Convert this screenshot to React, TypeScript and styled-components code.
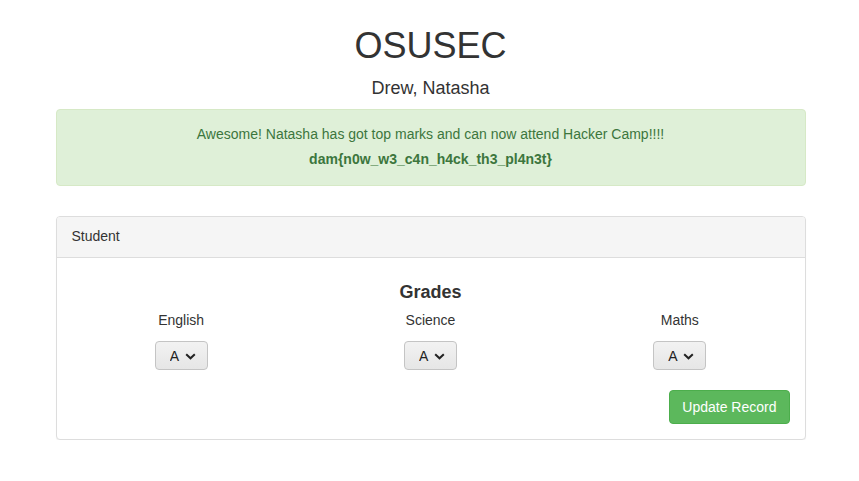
import React from "react";
import styled, { createGlobalStyle } from "styled-components";

const Global = createGlobalStyle`
  html, body { margin: 0; padding: 0; background: #fff; }
  body {
    font-family: "Liberation Sans", Arial, Helvetica, sans-serif;
    font-size: 14px;
    line-height: 1.42857;
    color: #333;
  }
  * { box-sizing: border-box; }
`;

const Page = styled.div`
  padding-left: 2px;
`;

const Container = styled.div`
  width: 750px;
  margin: 0 auto;
  padding-top: 6px;
`;

const Title = styled.h1`
  font-size: 36px;
  font-weight: 500;
  line-height: 1.1;
  text-align: center;
  margin: 20px 0 10px;
`;

const Subtitle = styled.h4`
  font-size: 18px;
  font-weight: 500;
  line-height: 1.1;
  text-align: center;
  margin: 13px 0 11px;
`;

const Alert = styled.div`
  background: #dff0d8;
  border: 1px solid #d6e9c6;
  color: #3c763d;
  border-radius: 4px;
  padding: 15px;
  text-align: center;
  margin-bottom: 30px;
`;

const AlertLine = styled.p<{ $bold?: boolean }>`
  margin: 0 0 ${(p) => (p.$bold ? 0 : 5)}px;
  font-weight: ${(p) => (p.$bold ? 700 : 400)};
`;

const Panel = styled.div`
  border: 1px solid #ddd;
  border-radius: 4px;
  background: #fff;
  box-shadow: 0 1px 1px rgba(0, 0, 0, 0.05);
`;

const PanelHeading = styled.div`
  background: #f5f5f5;
  border-bottom: 1px solid #ddd;
  border-radius: 3px 3px 0 0;
  padding: 10px 15px;
`;

const PanelBody = styled.div`
  padding: 15px;
`;

const Heading = styled.h3`
  text-align: center;
  font-size: 18px;
  font-weight: 700;
  line-height: 1.1;
  margin: 10px 0 7px;
`;

const Row = styled.div`
  display: grid;
  grid-template-columns: repeat(3, 1fr);
  margin: 0 -15px;
`;

const Col = styled.div`
  padding: 0 15px;
  text-align: center;
  display: flex;
  flex-direction: column;
  align-items: center;
`;

const Label = styled.label`
  display: block;
  line-height: 20px;
  margin-bottom: 11px;
`;

const SelectWrap = styled.div`
  position: relative;
  display: inline-flex;
`;

const Select = styled.select`
  appearance: none;
  -webkit-appearance: none;
  font-family: "Liberation Sans", Arial, sans-serif;
  font-size: 14px;
  color: #222;
  width: 53px;
  height: 29px;
  padding: 0 0 0 14px;
  border: 1px solid #c4c4c4;
  border-radius: 4px;
  background: linear-gradient(#f2f2f2, #e6e6e6);
  outline: none;
`;

const Chevron = styled.svg`
  position: absolute;
  right: 12px;
  top: 12px;
  width: 11px;
  height: 7px;
  pointer-events: none;
`;

const Footer = styled.div`
  display: flex;
  justify-content: flex-end;
  margin-top: 20px;
`;

const Button = styled.button`
  background: #5cb85c;
  border: 1px solid #4cae4c;
  color: #fff;
  font-family: "Liberation Sans", Arial, sans-serif;
  font-size: 14px;
  line-height: 20px;
  padding: 6px 12px;
  border-radius: 4px;
`;

const subjects = ["English", "Science", "Maths"];

export default function App() {
  return (
    <Page>
      <Global />
      <Container>
        <Title>OSUSEC</Title>
        <Subtitle>Drew, Natasha</Subtitle>
        <Alert>
          <AlertLine>Awesome! Natasha has got top marks and can now attend Hacker Camp!!!!</AlertLine>
          <AlertLine $bold>dam{"{"}n0w_w3_c4n_h4ck_th3_pl4n3t{"}"}</AlertLine>
        </Alert>
        <Panel>
          <PanelHeading>Student</PanelHeading>
          <PanelBody>
            <Heading>Grades</Heading>
            <Row>
              {subjects.map((s) => (
                <Col key={s}>
                  <Label>{s}</Label>
                  <SelectWrap>
                    <Select defaultValue="A">
                      <option>A</option>
                      <option>B</option>
                      <option>C</option>
                      <option>D</option>
                      <option>F</option>
                    </Select>
                    <Chevron viewBox="0 0 11 7">
                      <path d="M1.2 1.2 L5.5 5.3 L9.8 1.2" fill="none" stroke="#222" strokeWidth="2" />
                    </Chevron>
                  </SelectWrap>
                </Col>
              ))}
            </Row>
            <Footer>
              <Button>Update Record</Button>
            </Footer>
          </PanelBody>
        </Panel>
      </Container>
    </Page>
  );
}
